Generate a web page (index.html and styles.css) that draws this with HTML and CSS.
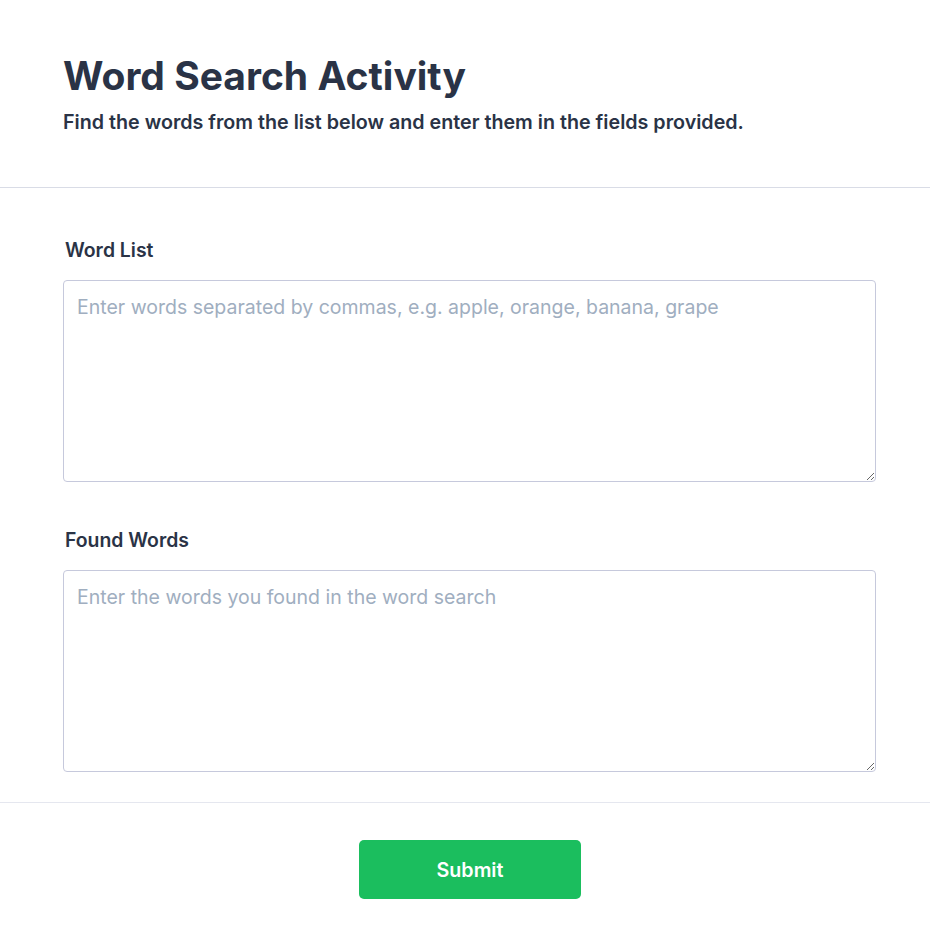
FILE: index.html
```html
<!DOCTYPE html>
<html lang="en">
<head>
<meta charset="utf-8">
<title>Word Search Activity</title>
<link rel="stylesheet" href="styles.css">
</head>
<body>
<header class="header">
  <h1 class="title">Word Search Activity</h1>
  <p class="subtitle">Find the words from the list below and enter them in the fields provided.</p>
</header>
<main class="form">
  <div class="field">
    <label class="label" for="list">Word List</label>
    <textarea id="list" class="input" placeholder="Enter words separated by commas, e.g. apple, orange, banana, grape"></textarea>
  </div>
  <div class="field">
    <label class="label" for="found">Found Words</label>
    <textarea id="found" class="input" placeholder="Enter the words you found in the word search"></textarea>
  </div>
</main>
<footer class="footer">
  <button class="submit" type="button">Submit</button>
</footer>
</body>
</html>
```

FILE: styles.css
```css
* { box-sizing: border-box; }
html, body { margin: 0; background: #ffffff; }
body {
  font-family: Inter, "Noto Sans", sans-serif;
  color: #2a3346;
}
.header {
  padding: 51px 63px 50px;
  border-bottom: 1px solid #d9dce6;
}
.title {
  margin: 0;
  font-size: 39px;
  line-height: 50px;
  font-weight: 700;
}
.subtitle {
  margin: 6px 0 0;
  font-size: 19.7px;
  line-height: 30px;
  font-weight: 600;
}
.form {
  padding: 47px 54px 30px 63px;
  display: flex;
  flex-direction: column;
  gap: 43px;
}
.field {
  display: flex;
  flex-direction: column;
}
.label {
  font-size: 19.4px;
  line-height: 30px;
  font-weight: 600;
  padding-left: 2px;
  margin-bottom: 15px;
}
.input {
  height: 202px;
  width: 100%;
  border: 1px solid #c6c9dc;
  border-radius: 4px;
  padding: 11px 13px;
  font-family: Inter, "Noto Sans", sans-serif;
  font-size: 19.5px;
  line-height: 30px;
  color: #2a3346;
  resize: vertical;
}
.input::placeholder { color: #a0aec0; }
.footer {
  border-top: 1px solid #e5e7ef;
  padding: 37px 0 40px 10px;
  display: flex;
  justify-content: center;
}
.submit {
  width: 222px;
  height: 59px;
  background: #1bbe5e;
  color: #ffffff;
  border: none;
  border-radius: 5px;
  font-family: Inter, "Noto Sans", sans-serif;
  font-size: 19.7px;
  font-weight: 600;
}
```
